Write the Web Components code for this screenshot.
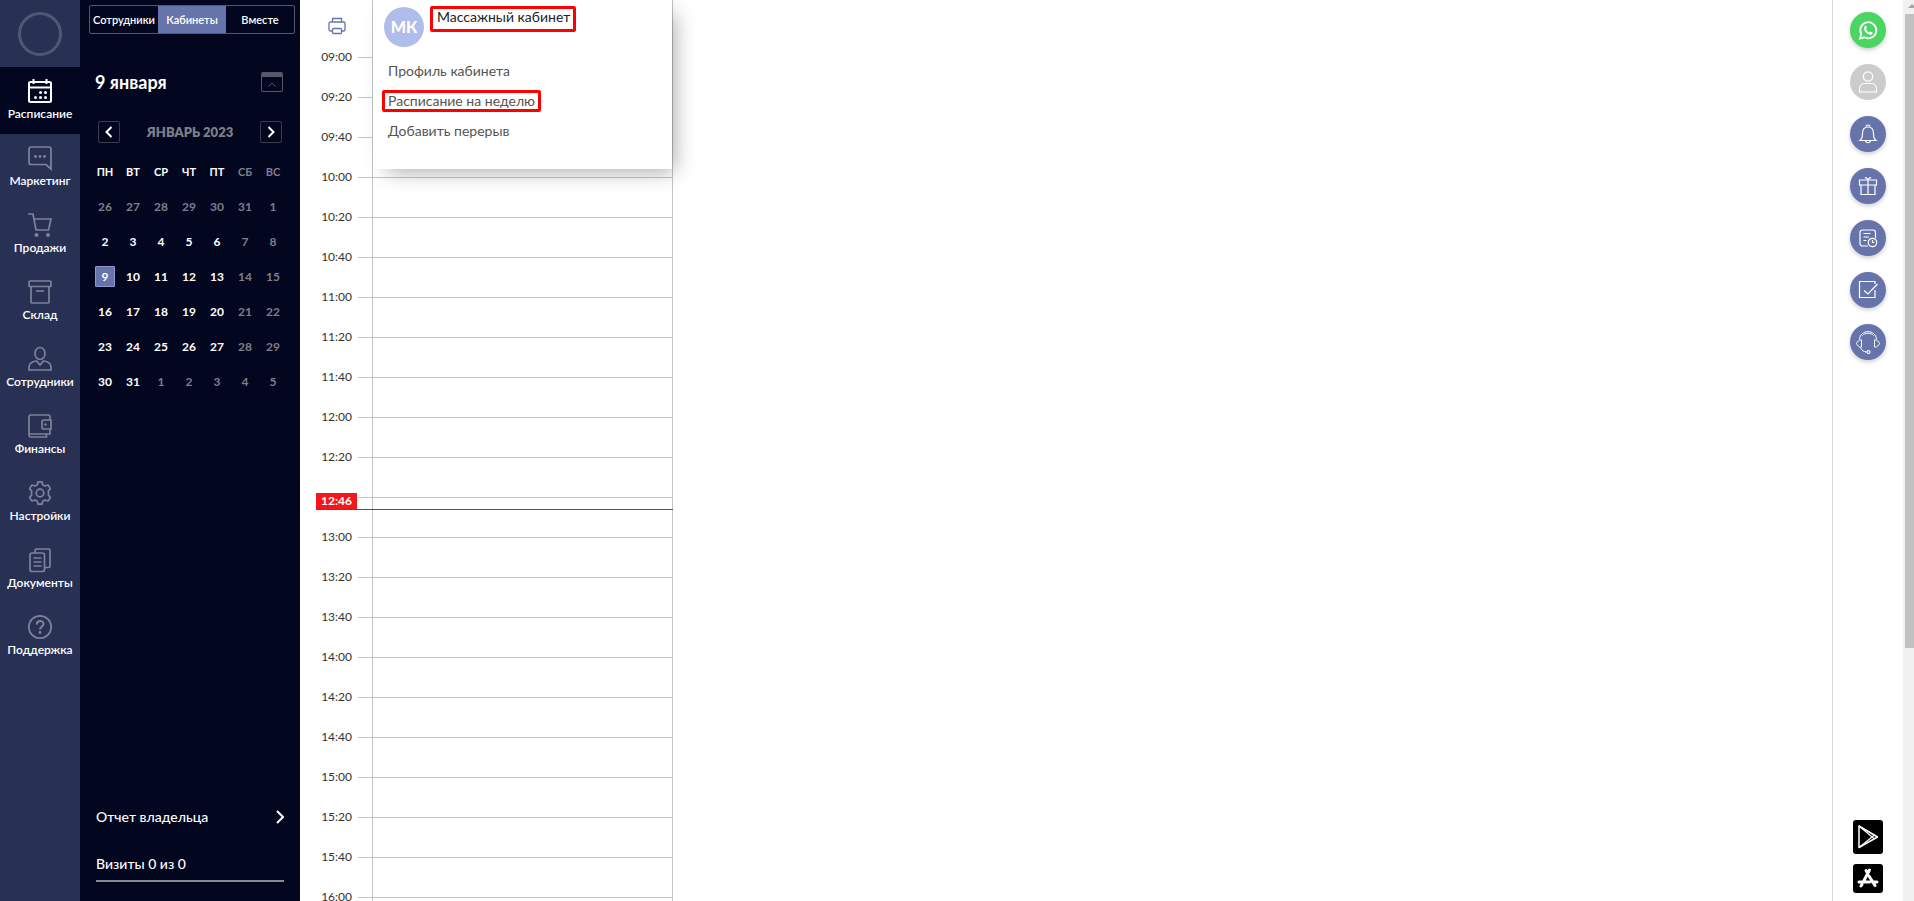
<!DOCTYPE html>
<html lang="ru">
<head>
<meta charset="utf-8">
<title>Расписание</title>
<style>
	body {
		margin: 0;
		font-family: Lato, Roboto, sans-serif;
		font-size: 14px;
		color: #333;
		background: #fff;
	}
</style>
</head>
<body>
<salon-app>
	<side-nav slot="nav">
		<nav-item icon="calendar" active>Расписание</nav-item>
		<nav-item icon="chat">Маркетинг</nav-item>
		<nav-item icon="cart">Продажи</nav-item>
		<nav-item icon="box">Склад</nav-item>
		<nav-item icon="person">Сотрудники</nav-item>
		<nav-item icon="wallet">Финансы</nav-item>
		<nav-item icon="gear">Настройки</nav-item>
		<nav-item icon="docs">Документы</nav-item>
		<nav-item icon="help">Поддержка</nav-item>
	</side-nav>
	<date-panel slot="panel">
		<view-tabs slot="tabs"></view-tabs>
		<month-calendar></month-calendar>
	</date-panel>
	<day-schedule slot="schedule">
		<room-menu></room-menu>
	</day-schedule>
	<quick-bar slot="quick"></quick-bar>
	<page-scroll slot="scroll"></page-scroll>
</salon-app>

<script>
// iconos del menu lateral, todos en caja 24x24
const navIcons = {
	calendar: '<rect x="1" y="3" width="22" height="20" rx="1.500" stroke-width="2"/><path d="M1 8.500h22M5.500 0v5M18.500 0v5" stroke-width="2"/><g fill="currentColor" stroke="none"><circle cx="12.500" cy="13.500" r="1.500"/><circle cx="17.500" cy="13.500" r="1.500"/><circle cx="7.500" cy="18.500" r="1.500"/><circle cx="12.500" cy="18.500" r="1.500"/><circle cx="17.500" cy="18.500" r="1.500"/></g>',
	chat: '<path d="M3 1h18a2 2 0 0 1 2 2v20l-5-4.500H3a2 2 0 0 1-2-2V3a2 2 0 0 1 2-2z"/><g fill="currentColor" stroke="none"><circle cx="7.500" cy="10.500" r="1.400"/><circle cx="12" cy="10.500" r="1.400"/><circle cx="16.500" cy="10.500" r="1.400"/></g>',
	cart: '<path d="M0 1h5l3 16h12.500L23 6H6"/><g fill="currentColor" stroke="none"><circle cx="8.500" cy="22" r="2"/><circle cx="20" cy="22" r="2"/></g>',
	box: '<rect x="1" y="1" width="22" height="5.500" rx="1"/><path d="M3 6.500V22a1 1 0 0 0 1 1h16a1 1 0 0 0 1-1V6.500M8 11h8"/>',
	person: '<ellipse cx="12" cy="6.500" rx="5" ry="6"/><path d="M8.500 14C4 14.500 1 16.500 1 20v3h22v-3c0-3.500-3-5.500-7.500-6L12 18z"/>',
	wallet: '<path d="M22 6V2.500A1.500 1.500 0 0 0 20.500 1h-18A1.500 1.500 0 0 0 1 2.500V21.500A1.500 1.500 0 0 0 2.500 23H18.500V20M1.500 20H22V15"/><path d="M23 6h-7a2 2 0 0 0-2 2v5a2 2 0 0 0 2 2h7z"/><circle cx="17.500" cy="10.500" r="1.200" fill="currentColor" stroke="none"/>',
	gear: '<path d="M9.300 3.800 10 .800h4l.700 3 2.200 1.200 3.200-1 2.300 3.600-2 2.300v4.200l2 2.300-2.300 3.600-3.200-1-2.200 1.200-.700 3h-4l-.700-3L7.100 19l-3.200 1-2.300-3.600 2-2.300V9.900l-2-2.300L3.900 4l3.200 1z" stroke-linejoin="round"/><circle cx="12" cy="12" r="3.800"/>',
	docs: '<rect x="2" y="5" width="14.500" height="18.500" rx="2"/><path d="M7 5V2.500A1.500 1.500 0 0 1 8.500 1H20.500A1.500 1.500 0 0 1 22 2.500v15.500a1.500 1.500 0 0 1-1.500 1.500H17M5.500 10h8M5.500 14h8M5.500 18h8"/>',
	help: '<circle cx="12" cy="12" r="11.200"/><path d="M8.800 9.500C8.800 5 15.500 5 15.500 9c0 2.500-3.500 2.600-3.500 5.500" stroke-width="2"/><circle cx="12" cy="17.500" r="1.400" fill="currentColor" stroke="none"/>'
};

class SalonApp extends HTMLElement {
	constructor() {
		super();
		this.attachShadow({ mode: 'open' });
	}

	connectedCallback() {
		this.shadowRoot.innerHTML = `
		<style>
		:host {
			display: flex;
			height: 100vh;
			overflow: hidden;
		}
		main {
			flex: 1;
			min-width: 0;
			display: flex;
		}
		</style>
		<slot name="nav"></slot>
		<slot name="panel"></slot>
		<main><slot name="schedule"></slot></main>
		<slot name="quick"></slot>
		<slot name="scroll"></slot>
		`;
	}
}

class SideNav extends HTMLElement {
	constructor() {
		super();
		this.attachShadow({ mode: 'open' });
	}

	connectedCallback() {
		this.shadowRoot.innerHTML = `
		<style>
		:host {
			display: block;
			flex: none;
			width: 80px;
			background: #283153;
		}
		.logo {
			display: flex;
			justify-content: center;
			align-items: center;
			height: 67px;
		}
		.logo span {
			box-sizing: border-box;
			width: 44px;
			height: 44px;
			border: 3px solid #4e5773;
			border-radius: 50%;
		}
		</style>
		<div class="logo"><span></span></div>
		<nav><slot></slot></nav>
		`;
	}
}

class NavItem extends HTMLElement {
	constructor() {
		super();
		this.attachShadow({ mode: 'open' });
	}

	connectedCallback() {
		this.shadowRoot.innerHTML = `
		<style>
		:host { display: block; }
		a {
			display: flex;
			flex-direction: column;
			align-items: center;
			box-sizing: border-box;
			height: 67px;
			padding-top: 12px;
			gap: 3px;
			color: #fff;
			font-size: 12px;
			font-weight: 600;
			line-height: 16px;
			text-decoration: none;
			white-space: nowrap;
		}
		svg {
			width: 24px;
			height: 24px;
			overflow: visible;
			color: #7d839a;
			fill: none;
			stroke: currentColor;
			stroke-width: 1.700;
		}
		:host([active]) a { background: #03061f; }
		:host([active]) svg { color: #fff; }
		</style>
		<a href="#"><svg viewBox="0 0 24 24" aria-hidden="true">${navIcons[this.getAttribute('icon')]}</svg><span><slot></slot></span></a>
		`;
	}
}

class DatePanel extends HTMLElement {
	constructor() {
		super();
		this.attachShadow({ mode: 'open' });
	}

	connectedCallback() {
		this.shadowRoot.innerHTML = `
		<style>
		:host {
			display: flex;
			flex-direction: column;
			flex: none;
			box-sizing: border-box;
			width: 220px;
			padding: 5px 5px 19px 9px;
			background: #03061f;
			color: #fff;
		}
		.day {
			display: flex;
			justify-content: space-between;
			align-items: center;
			height: 24px;
			margin: 36px 12px 0 6px;
		}
		h1 {
			margin: 0;
			font-size: 18px;
			line-height: 24px;
			font-weight: 700;
		}
		.fold {
			box-sizing: border-box;
			width: 22px;
			height: 20px;
			padding: 0;
			border: 1px solid #555869;
			border-top-width: 5px;
			border-radius: 2px;
			background: none;
			color: #555869;
			display: flex;
			justify-content: center;
			align-items: center;
		}
		svg { fill: none; stroke: currentColor; }
		.bottom {
			margin: auto 11px 0 7px;
			font-size: 14px;
			font-weight: 500;
			line-height: 20px;
		}
		.report {
			display: flex;
			justify-content: space-between;
			align-items: center;
			color: #fff;
			text-decoration: none;
		}
		.visits {
			margin-top: 27px;
			padding-bottom: 6px;
			border-bottom: 2px solid #888;
		}
		</style>
		<slot name="tabs"></slot>
		<div class="day">
			<h1>9 января</h1>
			<button class="fold" aria-label="Свернуть"><svg width="8" height="5" viewBox="0 0 8 5"><path d="M.500 4.500 4 1l3.500 3.500"/></svg></button>
		</div>
		<slot></slot>
		<div class="bottom">
			<a class="report" href="#">Отчет владельца <svg width="8" height="14" viewBox="0 0 8 14" stroke-width="2"><path d="m1 1 6 6-6 6"/></svg></a>
			<div class="visits">Визиты 0 из 0</div>
		</div>
		`;
	}
}

class ViewTabs extends HTMLElement {
	constructor() {
		super();
		this.attachShadow({ mode: 'open' });
	}

	connectedCallback() {
		this.shadowRoot.innerHTML = `
		<style>
		:host {
			display: grid;
			grid-template-columns: 1fr 1fr 1fr;
			border: 1px solid #555869;
			border-radius: 2px;
		}
		button {
			height: 27px;
			padding: 0;
			border: 0;
			background: none;
			color: #fff;
			font: inherit;
			font-size: 11px;
			font-weight: 600;
			white-space: nowrap;
		}
		.on { background: #6674ab; }
		</style>
		<button>Сотрудники</button>
		<button class="on">Кабинеты</button>
		<button>Вместе</button>
		`;
	}
}

class MonthCalendar extends HTMLElement {
	constructor() {
		super();
		this.attachShadow({ mode: 'open' });
		this.first = new Date(2022, 11, 26); // lunes de la primera fila
	}

	rows() {
		let html = '';
		for (let w = 0; w < 6; w++) {
			html += '<tr>';
			for (let d = 0; d < 7; d++) {
				const date = new Date(this.first);
				date.setDate(date.getDate() + w * 7 + d);
				const dim = date.getMonth() !== 0 || d > 4;
				const today = date.getMonth() === 0 && date.getDate() === 9;
				html += `<td><button class="${today ? 'today' : dim ? 'dim' : ''}">${date.getDate()}</button></td>`;
			}
			html += '</tr>';
		}
		return html;
	}

	connectedCallback() {
		const days = ['ПН', 'ВТ', 'СР', 'ЧТ', 'ПТ', 'СБ', 'ВС'];
		this.shadowRoot.innerHTML = `
		<style>
		:host { display: block; margin-top: 27px; }
		.month {
			display: flex;
			justify-content: space-between;
			align-items: center;
			margin: 0 13px 0 9px;
			color: #7d7f8b;
			font-size: 13px;
			font-weight: 800;
		}
		button {
			padding: 0;
			border: 0;
			background: none;
			color: inherit;
			font: inherit;
		}
		.arrow {
			display: flex;
			justify-content: center;
			align-items: center;
			box-sizing: border-box;
			width: 22px;
			height: 22px;
			border: 1px solid #3a3d50;
			border-radius: 2px;
		}
		svg { fill: none; stroke: #fff; stroke-width: 2; }
		table {
			margin: 11px 0 0 2px;
			border-collapse: collapse;
			table-layout: fixed;
			width: 196px;
			font-size: 12px;
			font-weight: 700;
			text-align: center;
		}
		th, td { height: 35px; padding: 0; }
		th { font-size: 11px; }
		td button {
			box-sizing: border-box;
			width: 20px;
			height: 21px;
			border-radius: 1px;
		}
		.dim, th:nth-child(n+6) { color: #7d7f8b; }
		.today { background: #6674ab; border: 1px solid #8c99cb; }
		</style>
		<div class="month">
			<button class="arrow" aria-label="Назад"><svg width="8" height="12" viewBox="0 0 8 12"><path d="M6.500 1 1.500 6l5 5"/></svg></button>
			<span>ЯНВАРЬ 2023</span>
			<button class="arrow" aria-label="Вперед"><svg width="8" height="12" viewBox="0 0 8 12"><path d="m1.500 1 5 5-5 5"/></svg></button>
		</div>
		<table>
			<thead><tr>${days.map((d) => `<th>${d}</th>`).join('')}</tr></thead>
			<tbody>${this.rows()}</tbody>
		</table>
		`;
	}
}

class DaySchedule extends HTMLElement {
	constructor() {
		super();
		this.attachShadow({ mode: 'open' });
	}

	slots() {
		let html = '';
		for (let m = 9 * 60; m <= 16 * 60; m += 20) {
			const h = String(Math.floor(m / 60)).padStart(2, '0');
			const time = h + ':' + String(m % 60).padStart(2, '0');
			// la hora actual tapa la etiqueta de las 12:40
			if (time === '12:40') {
				html += '<li><time></time><i></i><div class="now"><time>12:46</time></div></li>';
			} else {
				html += `<li><time>${time}</time><i></i></li>`;
			}
		}
		return html;
	}

	connectedCallback() {
		this.shadowRoot.innerHTML = `
		<style>
		:host {
			display: block;
			position: relative;
			width: 373px;
		}
		.head {
			display: grid;
			grid-template-columns: 72px 300px;
			height: 57px;
		}
		.print {
			justify-self: center;
			align-self: start;
			margin: 17px 0 0 2px;
			padding: 0;
			border: 0;
			background: none;
		}
		.print svg { display: block; fill: none; stroke: #6674ab; stroke-width: 1.300; }
		.head span {
			border-left: 1px solid #c4c4c4;
			border-right: 1px solid #c4c4c4;
			width: 299px;
		}
		ol { margin: 0; padding: 0; list-style: none; }
		li {
			position: relative;
			display: grid;
			grid-template-columns: 52px 321px;
			height: 40px;
			font-size: 12px;
			line-height: 16px;
		}
		li > time {
			margin-top: -8px;
			text-align: right;
		}
		i {
			box-sizing: border-box;
			display: grid;
			grid-template-columns: 14px 301px;
			margin-left: 6px;
			border-top: 1px solid #c4c4c4;
		}
		i::after {
			content: "";
			grid-column: 2;
			border-left: 1px solid #c4c4c4;
			border-right: 1px solid #c4c4c4;
			width: 299px;
		}
		.now {
			position: absolute;
			left: 16px;
			right: 0;
			bottom: 27px;
			border-bottom: 1px solid #d8191f;
			display: flex;
		}
		.now time {
			width: 36px;
			padding-right: 5px;
			background: #f5161b;
			color: #fff;
			font-weight: 700;
			text-align: right;
		}
		</style>
		<div class="head">
			<button class="print" aria-label="Печать"><svg width="18" height="18" viewBox="0 0 18 18"><path d="M4.500 5V1.500h9V5M4.500 14H2.500A1.500 1.500 0 0 1 1 12.500v-6A1.500 1.500 0 0 1 2.500 5h13A1.500 1.500 0 0 1 17 6.500v6a1.500 1.500 0 0 1-1.500 1.500h-2"/><rect x="4.500" y="11.500" width="9" height="5" rx="1"/></svg></button>
			<span></span>
		</div>
		<ol>${this.slots()}</ol>
		<slot></slot>
		`;
	}
}

class RoomMenu extends HTMLElement {
	constructor() {
		super();
		this.attachShadow({ mode: 'open' });
	}

	connectedCallback() {
		this.shadowRoot.innerHTML = `
		<style>
		:host {
			display: block;
			position: absolute;
			top: 0;
			left: 73px;
			box-sizing: border-box;
			width: 299px;
			height: 169px;
			padding: 6px 9px;
			background: #fff;
			box-shadow: 8px 8px 20px -6px rgba(0, 0, 0, .35);
			font-size: 14px;
		}
		header {
			display: flex;
			align-items: flex-start;
			gap: 6px;
		}
		.avatar {
			width: 40px;
			height: 40px;
			margin: 1px 0 0 2px;
			border-radius: 50%;
			background: #b0bdea;
			color: #fff;
			font-size: 16px;
			font-weight: 900;
			line-height: 40px;
			text-align: center;
		}
		h2 {
			margin: 0;
			font-size: inherit;
			font-weight: 400;
			line-height: 16px;
			padding: 0 4px 4px;
			width: 132px;
			white-space: nowrap;
			color: #222;
		}
		.mark {
			border: 3px solid #f00;
			border-radius: 2px;
		}
		ul { margin: 9px 0 0; padding: 0; list-style: none; }
		li { display: flex; align-items: center; height: 30px; }
		a {
			border: 3px solid transparent;
			padding: 0 3px;
			line-height: 16px;
			color: #555;
			text-decoration: none;
			white-space: nowrap;
		}
		a.mark { border-color: #f00; }
		</style>
		<header>
			<div class="avatar">МК</div>
			<h2 class="mark">Массажный кабинет</h2>
		</header>
		<ul>
			<li><a href="#">Профиль кабинета</a></li>
			<li><a href="#" class="mark">Расписание на неделю</a></li>
			<li><a href="#">Добавить перерыв</a></li>
		</ul>
		`;
	}
}

class QuickBar extends HTMLElement {
	constructor() {
		super();
		this.attachShadow({ mode: 'open' });
		this.items = [
			['WhatsApp', 'green', '<path d="m10 26.500 1.200-4.500A8 8 0 1 1 14.500 25.300z" stroke-width="1.800"/><path d="M14.500 14.500c1-1.200 1.800-.800 2.200.800l.200.900-.900 1c.800 1.700 1.800 2.700 3.400 3.300l1-1.100 2.100 1c.400.300-.100 2-1.500 2.300-2.900.600-7.300-3.600-6.900-6.700z" fill="#fff" stroke="none"/>'],
			['Профиль', 'grey', '<circle cx="18" cy="12.500" r="4.700"/><path d="M9.500 28v-3c0-3 2-5.500 5-5.500h7c3 0 5 2.500 5 5.500v3z"/>'],
			['Уведомления', '', '<path d="M10 24.500c2-1.500 2.500-3 2.500-7 0-4 2-6.500 5.500-6.500s5.500 2.500 5.500 6.500c0 4 .500 5.500 2.500 7zM16 10.500c0-2 4-2 4 0M15.500 24.500c.500 3 4.500 3 5 0"/>'],
			['Подарки', '', '<path d="M9.500 12h17v5h-17zM11 17h14v9.500H11zM18 12v14.500M18 12c-1.500-3-3-3-2.500-1.500M18 12c1.500-3 3-3 2.500-1.500"/>'],
			['История', '', '<path d="M18 26h-5.500a2.500 2.500 0 0 1-2.500-2.500v-11A2.500 2.500 0 0 1 12.500 10h10.500a2.500 2.500 0 0 1 2.500 2.500V18M13.500 13.500h7M13.500 17h5.500M13.500 20.500h3"/><circle cx="22.500" cy="22.500" r="4.200"/><path d="M22.500 20v2.500h2"/>'],
			['Задачи', '', '<path d="M25 12V9.500H9.500v16H25V18M14 18.500l4 3.500 9.500-10"/>'],
			['Помощь', '', '<path d="M9.500 15.500C10 5 26 5 26.500 15.500M12.500 11.500c2-3 9-3 11 0M11.500 16v7c-2 .500-3-.500-3.300-1.500C6 21 6 18 8.200 17.500c.300-1 1.300-2 3.300-1.500zM24.500 16v7c2 .500 3-.500 3.300-1.500C30 21 30 18 27.800 17.500c-.300-1-1.300-2-3.300-1.500zM10.500 23.500c1 3 3.500 4.500 6.500 4.500" stroke-width="1"/><circle cx="18.500" cy="28" r="1.500"/>']
		];
	}

	connectedCallback() {
		this.shadowRoot.innerHTML = `
		<style>
		:host {
			display: flex;
			flex-direction: column;
			align-items: center;
			flex: none;
			box-sizing: border-box;
			width: 71px;
			gap: 16px;
			padding: 12px 1px 8px 0;
			border-left: 1px solid #d6d6d6;
		}
		button, a {
			display: block;
			padding: 0;
			border: 0;
			background: none;
		}
		svg { display: block; fill: none; stroke: #fff; stroke-width: 1.200; }
		.round {
			flex: none;
			width: 36px;
			height: 36px;
			border-radius: 50%;
			background: #6674ab;
			box-shadow: 0 2px 4px rgba(0, 0, 0, .2);
		}
		.green { background: #4bd663; }
		.grey { background: #ccc; box-shadow: none; }
		.stores { display: grid; gap: 10px; margin-top: auto; }
		.stores a { width: 30px; border-radius: 3px; background: #000; }
		</style>
		${this.items.map(([name, cls, path]) => `<button class="round ${cls}" aria-label="${name}"><svg width="36" height="36" viewBox="0 0 36 36">${path}</svg></button>`).join('')}
		<div class="stores">
			<a href="#" aria-label="Google Play"><svg width="30" height="34" viewBox="0 0 30 34" stroke-linejoin="round"><path d="M6 6v21.500L24.500 17z" stroke-width="1.500"/><path d="M6 6l15.500 13M6 27.500 21.500 15" stroke-width="1.100"/></svg></a>
			<a href="#" aria-label="App Store"><svg width="30" height="29" viewBox="0 0 30 29"><path d="m13 6.500 1.500 2.500M16.500 6 10.500 17.500M6 18h10.500M16 12l6 9.500M19.500 18H24M9 20.500l-1 1.500" stroke-width="3" stroke-linecap="round"/></svg></a>
		</div>
		`;
	}
}

class PageScroll extends HTMLElement {
	constructor() {
		super();
		this.attachShadow({ mode: 'open' });
	}

	connectedCallback() {
		this.shadowRoot.innerHTML = `
		<style>
		:host {
			display: grid;
			grid-template-rows: 14px 5fr 2fr;
			flex: none;
			box-sizing: border-box;
			width: 11px;
			padding-left: 2px;
			background: #f1f1f1;
			overflow: hidden;
		}
		svg { display: block; fill: #a3a3a3; margin: 4px 0 0 3px; }
		.thumb { background: #c1c1c1; }
		</style>
		<svg width="8" height="4" viewBox="0 0 8 4"><path d="M0 4 4 0l4 4z"/></svg>
		<div class="thumb"></div>
		`;
	}
}

customElements.define('salon-app', SalonApp);
customElements.define('side-nav', SideNav);
customElements.define('nav-item', NavItem);
customElements.define('date-panel', DatePanel);
customElements.define('view-tabs', ViewTabs);
customElements.define('month-calendar', MonthCalendar);
customElements.define('day-schedule', DaySchedule);
customElements.define('room-menu', RoomMenu);
customElements.define('quick-bar', QuickBar);
customElements.define('page-scroll', PageScroll);
</script>
</body>
</html>
